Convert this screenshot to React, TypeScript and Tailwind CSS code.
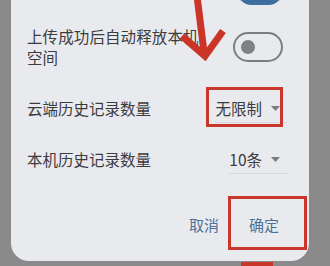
import React from "react";

// Small down-pointing caret used by the select fields
function Caret() {
  return (
    <svg width="9" height="5" viewBox="0 0 9 5" className="ml-[9px] shrink-0">
      <path d="M0 0 L9 0 L4.5 5 Z" fill="#7a7b7f" />
    </svg>
  );
}

type SelectProps = { value: string };

function SelectField({ value }: SelectProps) {
  return (
    <div className="flex h-[28px] shrink-0 items-center whitespace-nowrap border-b border-[#d6d7dc] pr-[7px]">
      <span className="text-[15.5px] leading-none text-[#3b3c3f]">{value}</span>
      <Caret />
    </div>
  );
}

export default function App() {
  return (
    <div className="relative h-[266px] w-[330px] overflow-hidden bg-[#8a8a8a] font-['Noto_Sans_CJK_SC','Noto_Sans',sans-serif]">
      {/* Dialog card */}
      <div className="ml-[11px] flex h-[261px] w-[298px] flex-col rounded-b-[18px] bg-[#e9eaee] pl-[16px] pr-[22px]">
        {/* Previous switch (cut off at top) */}
        <div className="flex justify-end pr-[4px]">
          <div className="-mt-[24px] h-[29px] w-[46px] rounded-full bg-[#3e6e9e]" />
        </div>

        {/* Auto release row */}
        <div className="mt-[21px] flex items-center justify-between">
          <div className="whitespace-nowrap text-[15.5px] leading-[21px] tracking-[0.1px] text-[#3b3c3f]">
            <div>上传成功后自动释放本机</div>
            <div>空间</div>
          </div>
          <div className="mr-[4px] flex h-[30px] w-[50px] shrink-0 items-center rounded-full border-2 border-[#7c7d81] bg-[#e9eaee] pl-[6px]">
            <div className="h-[14px] w-[14px] rounded-full bg-[#7f8084]" />
          </div>
        </div>

        {/* Cloud history */}
        <div className="mt-[27px] flex items-center justify-between">
          <span className="whitespace-nowrap text-[15.5px] leading-none text-[#3b3c3f]">云端历史记录数量</span>
          <SelectField value="无限制" />
        </div>

        {/* Local history */}
        <div className="mt-[23px] flex items-center justify-between">
          <span className="whitespace-nowrap text-[15.5px] leading-none text-[#3b3c3f]">本机历史记录数量</span>
          <SelectField value="10条" />
        </div>

        {/* Actions */}
        <div className="mt-auto mb-[29px] flex justify-end gap-[30px] pr-[8px] text-[15px] leading-none text-[#4d6f98]">
          <button type="button">取消</button>
          <button type="button">确定</button>
        </div>
      </div>

      {/* Annotation: arrow */}
      <svg
        className="pointer-events-none absolute left-0 top-0"
        width="330"
        height="266"
        viewBox="0 0 330 266"
      >
        <path
          d="M197 -4 L204 52 M182 36 L205 56 L223 31"
          fill="none"
          stroke="#cb3527"
          strokeWidth="7"
          strokeLinejoin="miter"
        />
      </svg>

      {/* Annotation: boxes */}
      <div className="pointer-events-none absolute left-[206px] top-[87px] h-[40px] w-[77px] border-[3px] border-[#c9372c]" />
      <div className="pointer-events-none absolute left-[228px] top-[196px] h-[54px] w-[79px] border-[3px] border-[#c9372c]" />
      <div className="pointer-events-none absolute left-[241px] top-[262px] h-[6px] w-[32px] bg-[#c9372c]" />
    </div>
  );
}
